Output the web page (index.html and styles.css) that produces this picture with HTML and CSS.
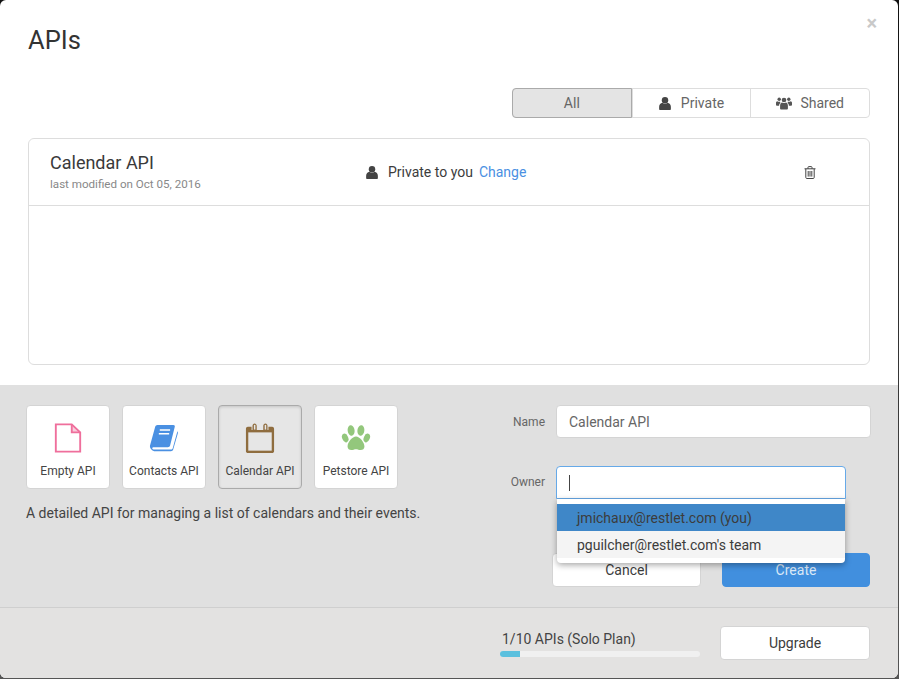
FILE: index.html
```html
<!DOCTYPE html>
<html>
<head>
<meta charset="utf-8">
<title>APIs</title>
<link rel="stylesheet" href="styles.css">
</head>
<body>
<svg class="sprites" width="0" height="0">
  <symbol id="i-user" viewBox="1 .6 12 13.3">
    <circle cx="7" cy="3.9" r="3.3"/>
    <path d="M1 13.2v-2.6c0-2.4 1.5-3.9 3.4-4.2 .7 .6 1.6 1 2.6 1s1.9-.4 2.6-1c1.9 .3 3.4 1.8 3.4 4.2v2.6c0 .4-.3 .7-.8 .7H1.8c-.5 0-.8-.3-.8-.7z"/>
  </symbol>
  <symbol id="i-users" viewBox="0 .7 18 13.300">
    <circle cx="9" cy="3.4" r="2.6"/>
    <circle cx="3.6" cy="2.6" r="1.9"/>
    <circle cx="14.4" cy="2.6" r="1.9"/>
    <path d="M4.6 13v-3.2c0-2 1-3.3 2.3-3.6 .6 .4 1.3 .7 2.1 .7s1.5-.3 2.1-.7c1.300 .3 2.300 1.600 2.300 3.600V13c0 .6-.4 1-1 1H5.600c-.6 0-1-.4-1-1z"/>
    <path d="M0 8.800V6.600c0-1 .6-1.800 1.500-1.800 .5 .4 1.200 .6 2 .6 .4 0 .8 0 1.100-.2-.2 .6 0 1.200 .5 1.700C4 7.500 3.500 8.600 3.500 9.800H1c-.6 0-1-.4-1-1zM18 8.800V6.600c0-1-.6-1.800-1.500-1.800-.5 .4-1.200 .6-2 .6-.4 0-.8 0-1.100-.2 .2 .6 0 1.200-.5 1.700 1.100 .6 1.600 1.700 1.600 2.900H17c.6 0 1-.4 1-1z"/>
  </symbol>
</svg>

<div class="modal">
  <div class="top">
    <div class="head">
      <h1 class="title">APIs</h1>
      <span class="close">×</span>
    </div>

    <div class="tabs">
      <div class="tab active">All</div>
      <div class="tab"><svg class="ico-user"><use href="#i-user"/></svg>Private</div>
      <div class="tab"><svg class="ico-users"><use href="#i-users"/></svg>Shared</div>
    </div>

    <div class="list">
      <div class="row">
        <div class="row-name">
          <div class="api-name">Calendar API</div>
          <div class="api-date">last modified on Oct 05, 2016</div>
        </div>
        <div class="row-share">
          <svg class="ico-user"><use href="#i-user"/></svg>
          <span>Private to you</span>
          <a class="change">Change</a>
        </div>
        <svg class="trash" viewBox="0 0 12 13" fill="none" stroke="#444" stroke-width="1">
          <path d="M.5 2.800h11M4 2.800V1.300c0-.4 .3-.7 .7-.7h2.600c.4 0 .7 .3 .7 .7v1.500"/>
          <path d="M1.800 2.800v8.700c0 .6 .4 1 1 1h6.400c.6 0 1-.4 1-1V2.800"/>
          <path d="M4.200 5v5.600M6 5v5.600M7.800 5v5.600"/>
        </svg>
      </div>
    </div>
  </div>

  <div class="bottom">
    <div class="form-area">
      <div class="templates">
        <div class="cards">
          <div class="card">
            <svg class="card-ico" viewBox="0 0 30 32" fill="none" stroke="#ef6f9c" stroke-width="2">
              <path d="M2 1.500h17l9 8.500v20.500H2z"/>
              <path d="M19 1.500v8.500h9" fill="#ef6f9c" fill-opacity=".35"/>
            </svg>
            <span>Empty API</span>
          </div>
          <div class="card">
            <svg class="card-ico" viewBox="-1 -1 32 32">
              <path fill="#4a90e2" d="M8 1h17c1.200 0 1.800 .8 1.500 2l-5 20c-.3 1.100-1.200 1.800-2.400 1.800H3.500c-.8 0-1.300 .8-1 1.500 .2 .6 .8 .9 1.500 .9h18.500c.9 0 1.500-.4 1.800-1.300l5-18c.5 .5 .7 1.100 .5 1.900l-5 17.500c-.3 1-1.300 1.700-2.400 1.700H4.500C2 28 0 26.500 0 24c0-.7 .1-1.300 .3-1.900L5.600 3C6 1.800 6.800 1 8 1z"/>
              <path fill="none" stroke="#fff" stroke-width="1.600" d="M10.500 6.500h11M9.500 10.500h11"/>
            </svg>
            <span>Contacts API</span>
          </div>
          <div class="card selected">
            <svg class="card-ico" viewBox="-1 0 32 32">
              <path fill="#8f6d3f" d="M2 4h4v3.500h1V3c0-1.500 1-2.500 2.200-2.500S11.500 1.500 11.500 3v4.500h7V3c0-1.500 1-2.500 2.300-2.500S23 1.500 23 3v4.500h1V4h4c1 0 2 1 2 2v24c0 1-1 2-2 2H2c-1 0-2-1-2-2V6c0-1 1-2 2-2z"/>
              <rect x="2.500" y="10" width="25" height="19.500" fill="#e6e6e6"/>
              <rect x="8.500" y="2" width="1.600" height="5" fill="#e6e6e6"/>
              <rect x="20" y="2" width="1.600" height="5" fill="#e6e6e6"/>
            </svg>
            <span>Calendar API</span>
          </div>
          <div class="card">
            <svg class="card-ico" viewBox="-1 -2 32 32" fill="#93c77c">
              <ellipse cx="9.800" cy="6" rx="3.700" ry="5.600" transform="rotate(-8 9.800 6)"/>
              <ellipse cx="20.200" cy="6" rx="3.700" ry="5.600" transform="rotate(8 20.200 6)"/>
              <ellipse cx="3.500" cy="14" rx="3.200" ry="4.800" transform="rotate(-22 3.500 14)"/>
              <ellipse cx="26.500" cy="14" rx="3.200" ry="4.800" transform="rotate(22 26.500 14)"/>
              <path d="M15 12.500c3.800 0 9 6 9 10.500 0 2.500-1.800 3.800-4 3.800-1.600 0-3.500-.8-5-.8s-3.400 .8-5 .8c-2.200 0-4-1.300-4-3.800 0-4.500 5.200-10.500 9-10.500z"/>
            </svg>
            <span>Petstore API</span>
          </div>
        </div>
        <p class="desc">A detailed API for managing a list of calendars and their events.</p>
      </div>

      <div class="fields">
        <div class="field">
          <label class="field-label">Name</label>
          <div class="input">Calendar API</div>
        </div>
        <div class="field field-owner">
          <label class="field-label">Owner</label>
          <div class="owner-wrap">
            <div class="input focus"><span class="caret"></span></div>
            <ul class="menu">
              <li class="on">jmichaux@restlet.com (you)</li>
              <li>pguilcher@restlet.com's team</li>
            </ul>
          </div>
        </div>
        <div class="actions">
          <button class="btn">Cancel</button>
          <button class="btn primary">Create</button>
        </div>
      </div>
    </div>

    <div class="footer">
      <div class="plan">
        <div class="plan-text">1/10 APIs (Solo Plan)</div>
        <div class="bar"><div class="bar-fill" style="width: 10%"></div></div>
      </div>
      <button class="btn upgrade">Upgrade</button>
    </div>
  </div>
</div>
</body>
</html>
```

FILE: styles.css
```css
/* Base */
html, body {
    margin: 0;
    height: 679px;
    overflow: hidden;
}

body {
    background: linear-gradient(#111, #555);
    font-family: Roboto, "Liberation Sans", sans-serif;
    color: #3c3c3c;
}

.sprites {
    position: absolute;
}

.modal {
    width: 898px;
    height: 678px;
    background-color: #fff;
    border-radius: 6px;
    overflow: hidden;
    display: flex;
    flex-direction: column;
}

/* Top part */
.top {
    height: 385px;
    padding: 0 28px;
    box-sizing: border-box;
}

.head {
    height: 88px;
    display: flex;
    justify-content: space-between;
}

.title {
    margin: 26px 0 0;
    font-size: 25.5px;
    line-height: 28px;
    font-weight: 400;
    color: #333;
}

.close {
    margin: 12px -7px 0 0;
    font-size: 20px;
    line-height: 22px;
    font-weight: 700;
    color: #c9c9c9;
}

.tabs {
    width: 358px;
    height: 30px;
    margin-left: auto;
    box-sizing: border-box;
    display: flex;
    border: 1px solid #ddd;
    border-radius: 4px;
}

.tab {
    flex: 1;
    display: flex;
    align-items: center;
    justify-content: center;
    gap: 10px;
    font-size: 14px;
    color: #666;
    border-left: 1px solid #ddd;
}

.tab:first-child {
    border-left: 0;
}

.tab.active {
    margin: -1px 0 -1px -1px;
    background-color: #e4e4e4;
    border: 1px solid #aaa;
    border-radius: 4px 0 0 4px;
}

.ico-user {
    width: 12px;
    height: 13px;
    fill: #444;
}

.ico-users {
    width: 16px;
    height: 13px;
    fill: #555;
    margin-right: -2px;
}

/* API list */
.list {
    height: 227px;
    margin-top: 20px;
    box-sizing: border-box;
    border: 1px solid #ddd;
    border-radius: 6px;
}

.row {
    height: 67px;
    box-sizing: border-box;
    padding: 0 53px 0 21px;
    display: flex;
    align-items: center;
    border-bottom: 1px solid #ddd;
}

.row-name {
    width: 316px;
}

.api-name {
    font-size: 18px;
    line-height: 20px;
    color: #3a3a3a;
}

.api-date {
    font-size: 11.6px;
    line-height: 14px;
    margin-top: 4px;
    color: #888;
}

.row-share {
    flex: 1;
    display: flex;
    align-items: center;
    font-size: 14px;
    color: #3c3c3c;
}

.row-share .ico-user {
    margin-right: 10px;
}

.change {
    margin-left: 6px;
    color: #4a90e2;
}

.trash {
    width: 12px;
    height: 13px;
}

/* Bottom part */
.bottom {
    flex: 1;
    background-color: #e0e0e0;
    display: flex;
    flex-direction: column;
}

.form-area {
    height: 223px;
    box-sizing: border-box;
    padding: 20px 27px 0 26px;
    display: flex;
    justify-content: space-between;
    border-bottom: 1px solid #cfcfcf;
}

.cards {
    display: flex;
    gap: 12px;
}

.card {
    width: 84px;
    height: 84px;
    box-sizing: border-box;
    padding-top: 17px;
    background-color: #fff;
    border: 1px solid #d4d4d4;
    border-radius: 4px;
    display: flex;
    flex-direction: column;
    align-items: center;
    font-size: 12px;
    color: #444;
}

.card.selected {
    background-color: #e6e6e6;
    border-color: #aaa;
    box-shadow: inset 0 1px 3px rgba(0, 0, 0, 0.15);
}

.card-ico {
    width: 30px;
    height: 30px;
    margin-bottom: 11px;
}

.desc {
    margin: 15px 0 0;
    font-size: 14px;
    line-height: 18px;
    color: #444;
}

/* Form fields */
.fields {
    width: 361px;
    font-size: 14px;
}

.field {
    display: flex;
    align-items: center;
    gap: 11px;
}

.field-owner {
    margin-top: 28px;
    align-items: flex-start;
}

.field-label {
    width: 35px;
    text-align: right;
    font-size: 12px;
    color: #666;
}

.field-owner .field-label {
    line-height: 33px;
}

.input {
    width: 315px;
    height: 33px;
    box-sizing: border-box;
    padding-left: 12px;
    line-height: 32px;
    color: #666;
    background-color: #fff;
    border: 1px solid #d4d4d4;
    border-radius: 4px;
}

.owner-wrap {
    position: relative;
}

.input.focus {
    width: 290px;
    border-color: #66a9e8;
    border-radius: 4px 4px 0 0;
    display: flex;
    align-items: center;
}

.caret {
    width: 1px;
    height: 16px;
    background-color: #444;
}

.menu {
    position: absolute;
    top: 33px;
    left: 1px;
    width: 288px;
    margin: 0;
    padding: 5px 0;
    box-sizing: border-box;
    height: 64px;
    list-style: none;
    background-color: #fff;
    border-radius: 0 0 4px 4px;
    box-shadow: 0 2px 6px rgba(0, 0, 0, 0.35);
    font-size: 14px;
    color: #3c3c3c;
}

.menu li {
    height: 27px;
    line-height: 28px;
    padding-left: 20px;
    background-color: #f4f4f4;
}

.menu li.on {
    background-color: #3f87c8;
}

.actions {
    margin-top: 54px;
    padding: 0 1px 0 42px;
    display: flex;
    justify-content: space-between;
}

.btn {
    width: 149px;
    height: 34px;
    padding: 0;
    font-family: inherit;
    font-size: 14px;
    color: #3c3c3c;
    background-color: #fff;
    border: 1px solid #d4d4d4;
    border-radius: 4px;
}

.btn.primary {
    width: 148px;
    color: #dce9f7;
    background-color: #418fde;
    border-color: #418fde;
}

/* Footer */
.footer {
    flex: 1;
    padding: 0 28px 0 500px;
    background-color: #e3e2e1;
    display: flex;
    align-items: center;
    justify-content: space-between;
}

.plan {
    width: 200px;
    margin-top: 2px;
}

.plan-text {
    padding-left: 2px;
    font-size: 14px;
    line-height: 16px;
    color: #444;
}

.bar {
    height: 6px;
    margin-top: 4px;
    border-radius: 3px;
    overflow: hidden;
    background-color: #f0f0f0;
}

.bar-fill {
    height: 100%;
    background-color: #5bc0de;
}

.btn.upgrade {
    width: 150px;
}
```
